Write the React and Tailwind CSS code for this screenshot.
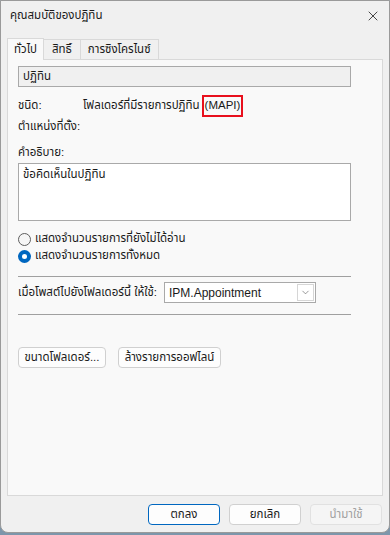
import { ChevronDown, X } from "lucide-react";

const font = "font-['Liberation_Sans','Noto_Sans_Thai','Noto_Sans',sans-serif]";

function Btn({ children, primary, disabled, className = "" }) {
  return (
    <button
      type="button"
      disabled={disabled}
      className={
        "h-[21px] rounded-[4px] border text-[11.5px] leading-none " +
        (primary
          ? "border-[#0067c0] bg-[#fdfdfd] text-[#1a1a1a] "
          : disabled
          ? "border-[#e1e1e1] bg-[#f5f5f5] text-[#a0a0a0] "
          : "border-[#d0d0d0] bg-[#fdfdfd] text-[#1a1a1a] ") +
        className
      }
    >
      {children}
    </button>
  );
}

function Radio({ checked, label }) {
  return (
    <div className="flex items-center gap-[4px] h-[16px]">
      {checked ? (
        <span className="w-[13px] h-[13px] rounded-full bg-[#0067c0] flex items-center justify-center">
          <span className="w-[5px] h-[5px] rounded-full bg-white" />
        </span>
      ) : (
        <span className="w-[13px] h-[13px] rounded-full border border-[#5e5e5e] bg-[#f6f6f6]" />
      )}
      <span>{label}</span>
    </div>
  );
}

export default function App() {
  return (
    <div className={"w-[390px] h-[535px] bg-[#7d96ab] text-[11.5px] text-[#1a1a1a] " + font}>
      <div className="h-[533px] bg-[#f0f0f0] border border-[#9a9a9a] rounded-b-[8px] flex flex-col">
        {/* title bar */}
        <div className="h-[30px] flex items-center justify-between pl-[9px] pr-[8px]">
          <span>คุณสมบัติของปฏิทิน</span>
          <X size={16} strokeWidth={1.2} className="text-[#1a1a1a]" />
        </div>

        {/* tabs */}
        <div className="px-[6px] pt-[7px] flex items-end">
          <div className="h-[22px] px-[6px] bg-[#f9f9f9] border border-b-0 border-[#d9d9d9] flex items-center relative z-10 -mb-px">
            ทั่วไป
          </div>
          <div className="h-[20px] px-[8px] bg-[#f0f0f0] border border-l-0 border-b-0 border-[#d9d9d9] flex items-center">
            สิทธิ์
          </div>
          <div className="h-[20px] px-[7px] bg-[#f0f0f0] border border-l-0 border-b-0 border-[#d9d9d9] flex items-center">
            การซิงโครไนซ์
          </div>
        </div>

        <div className="mx-[6px] h-[437px] bg-[#f9f9f9] border border-[#d9d9d9] pl-[10px] pr-[31px] pt-[6px] flex flex-col">
          <div className="h-[21px] border border-[#a9a9a9] bg-[#f0f0f0] px-[4px] flex items-center">ปฏิทิน</div>

          <div className="mt-[9px] flex items-center h-[20px]">
            <span className="w-[65px]">ชนิด:</span>
            <span>โฟลเดอร์ที่มีรายการปฏิทิน</span>
            <span className="ml-[2px] border-[2px] border-[#e8101d] px-[1px] h-[22px] flex items-center">(MAPI)</span>
          </div>
          <div className="mt-[2px] h-[18px] flex items-center">ตำแหน่งที่ตั้ง:</div>

          <div className="mt-[9px] h-[16px] flex items-center">คำอธิบาย:</div>
          <div className="mt-[2px] h-[58px] border border-[#a9a9a9] bg-white px-[4px] pt-[2px]">ข้อคิดเห็นในปฏิทิน</div>

          <div className="mt-[10px] flex flex-col gap-[1px]">
            <Radio label="แสดงจำนวนรายการที่ยังไม่ได้อ่าน" />
            <Radio checked label="แสดงจำนวนรายการทั้งหมด" />
          </div>

          <div className="mt-[12px] border-t border-[#a0a0a0]" />
          <div className="mt-[5px] flex items-center h-[21px]">
            <span className="w-[146px]">เมื่อโพสต์ไปยังโฟลเดอร์นี้ ให้ใช้:</span>
            <div className="w-[152px] h-[21px] border border-[#a9a9a9] bg-white flex items-center justify-between pl-[4px] pr-[1px] text-[12px]">
              <span>IPM.Appointment</span>
              <span className="w-[17px] h-[17px] border border-[#d6d6d6] flex items-center justify-center">
                <ChevronDown size={11} strokeWidth={1.3} className="text-[#555]" />
              </span>
            </div>
          </div>
          <div className="mt-[11px] border-t border-[#a0a0a0]" />

          <div className="mt-[32px] flex gap-[12px]">
            <Btn className="w-[88px]">ขนาดโฟลเดอร์...</Btn>
            <Btn className="w-[103px]">ล้างรายการออฟไลน์</Btn>
          </div>
        </div>

        <div className="mt-[8px] pr-[7px] flex justify-end gap-[9px]">
          <Btn primary className="w-[72px]">ตกลง</Btn>
          <Btn className="w-[72px]">ยกเลิก</Btn>
          <Btn disabled className="w-[72px]">นำมาใช้</Btn>
        </div>
      </div>
    </div>
  );
}
